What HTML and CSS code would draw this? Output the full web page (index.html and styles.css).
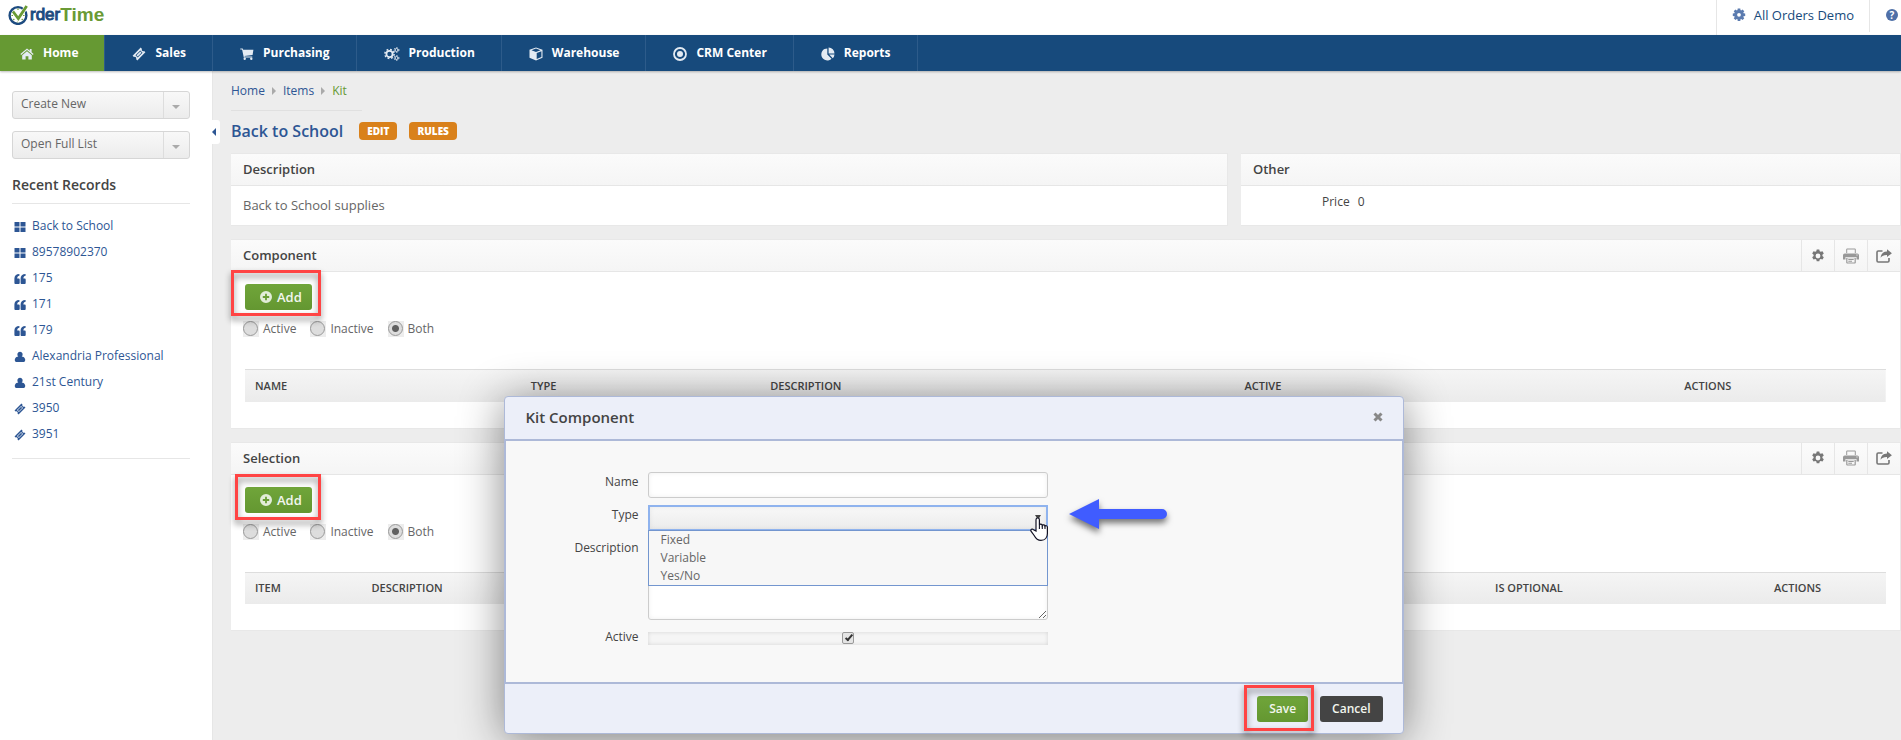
FILE: index.html
```html
<!DOCTYPE html>
<html lang="en">
<head>
    <meta charset="UTF-8">
    <meta name="viewport" content="width=device-width, initial-scale=1.0">
    <title>Order Time - Kit</title>
    <link rel="stylesheet" href="styles.css">
</head>
<body>
    <!-- icon sprite -->
    <svg class="sprite" aria-hidden="true">
        <symbol id="i-home" viewBox="0 0 14 12">
            <path d="M7 3.2 2.2 7.2v4.3h3.4V8.3h2.8v3.2h3.4V7.2z"/>
            <path d="M7 .5.4 6l.8.9L7 2.1l5.8 4.8.8-.9-2-1.7V.9H9.8v1.9z"/>
        </symbol>
        <symbol id="i-ticket" viewBox="0 0 14 14">
            <path fill-rule="evenodd" d="M8.700.6 10 1.900a1.500 1.500 0 0 0 2.100 2.100l1.300 1.300-8.100 8.100L4 12.100A1.500 1.500 0 0 0 1.900 10L.6 8.700zM8.300 3.500 3.500 8.300l2.200 2.200 4.800-4.800zM8.300 4.500 9.500 5.700 5.700 9.500 4.500 8.300z"/>
        </symbol>
        <symbol id="i-cart" viewBox="0 0 14 12">
            <path d="M.3.4h2.400l.5 1.400h10.200L12.600 7 4.500 7.900l.2.7h7.600v1H3.800L2.100 1.400H.3z"/>
            <circle cx="4.700" cy="10.700" r="1.200"/><circle cx="11.300" cy="10.700" r="1.200"/>
        </symbol>
        <symbol id="i-gears" viewBox="0 0 16 14">
            <circle cx="5.500" cy="7" r="3.100" fill="none" stroke="currentColor" stroke-width="1.800"/>
            <circle cx="5.500" cy="7" r="4.600" fill="none" stroke="currentColor" stroke-width="1.500" stroke-dasharray="1.800 1.810"/>
            <circle cx="12.500" cy="3" r="1.500" fill="none" stroke="currentColor" stroke-width="1"/>
            <circle cx="12.500" cy="3" r="2.400" fill="none" stroke="currentColor" stroke-width="1" stroke-dasharray="1.200 1.310"/>
            <circle cx="12.500" cy="11" r="1.500" fill="none" stroke="currentColor" stroke-width="1"/>
            <circle cx="12.500" cy="11" r="2.400" fill="none" stroke="currentColor" stroke-width="1" stroke-dasharray="1.200 1.310"/>
        </symbol>
        <symbol id="i-cube" viewBox="0 0 14 14">
            <path fill-rule="evenodd" d="M7 .4 13.500 2.800v8L7 13.600.5 10.800v-8zM7 1.500 2.500 3.200 7 4.900l4.500-1.700zM7.700 6v6.100l4.700-2V4.200z"/>
        </symbol>
        <symbol id="i-target" viewBox="0 0 14 14">
            <circle cx="7" cy="7" r="6" fill="none" stroke="currentColor" stroke-width="1.800"/>
            <circle cx="7" cy="7" r="3"/>
        </symbol>
        <symbol id="i-pie" viewBox="0 0 14 14">
            <path d="M6.300 1.400v6l4.200 4.300A6 6 0 1 1 6.300 1.400z"/>
            <path d="M7.600.4a6 6 0 0 1 5.900 6H7.600zM8.200 7.600h5.300a6 6 0 0 1-1.700 3.700z"/>
        </symbol>
        <symbol id="i-cog" viewBox="0 0 14 14">
            <path fill-rule="evenodd" d="M5.700.5h2.600l.4 1.800 1 .5 1.800-.6 1.300 2.200-1.400 1.300v1.200l1.400 1.300-1.300 2.200-1.800-.5-1 .5-.4 1.900H5.700l-.4-1.900-1-.5-1.800.5-1.300-2.200 1.400-1.300V5.700L1.200 4.400l1.300-2.200 1.800.6 1-.5zM7 4.600a2.400 2.400 0 1 0 0 4.800 2.400 2.400 0 0 0 0-4.800z"/>
        </symbol>
        <symbol id="i-cert" viewBox="0 0 14 14">
            <path fill-rule="evenodd" d="M5.700.5h2.600l.2 1.600.7.3 1.300-1 1.800 1.800-1 1.300.3.700 1.600.2v2.600l-1.600.2-.3.700 1 1.300-1.800 1.800-1.300-1-.7.3-.2 1.700H5.700l-.2-1.700-.7-.3-1.300 1-1.800-1.800 1-1.300-.3-.7L.8 8V5.400l1.600-.2.3-.7-1-1.300 1.800-1.800 1.300 1 .7-.3zM7 4.900a1.900 1.900 0 1 0 0 3.800 1.900 1.900 0 0 0 0-3.800z"/>
        </symbol>
        <symbol id="i-print" viewBox="0 0 16 16">
            <path d="M3.200 5V1.500a1 1 0 0 1 1-1h7.600a1 1 0 0 1 1 1V5h-1V1.600H4.200V5z"/>
            <path fill-rule="evenodd" d="M1.800 5.500h12.400A1.800 1.800 0 0 1 16 7.300v4.200h-2.500V9h-11v2.500H0V7.300a1.800 1.800 0 0 1 1.800-1.800zm11.700 1v1h1v-1z"/>
            <path fill-rule="evenodd" d="M3.200 9.800h9.600v4.700a1 1 0 0 1-1 1H4.200a1 1 0 0 1-1-1zm1.200.5v4.100h7.200v-4.100z"/>
            <path d="M5.300 11h5.400v1H5.300zM5.300 12.700h3.700v1H5.300z"/>
        </symbol>
        <symbol id="i-share" viewBox="0 0 16 14">
            <path d="M6.500 2H2.200A1.200 1.200 0 0 0 1 3.200v8.600A1.200 1.200 0 0 0 2.200 13h9.600a1.200 1.200 0 0 0 1.200-1.200V9" fill="none" stroke="currentColor" stroke-width="1.600"/>
            <path d="M11 .3 15.900 4.200 11 8.100V6C8 5.900 6 6.700 4.600 8.800 4.800 5.300 7 2.600 11 2.500z"/>
        </symbol>
        <symbol id="i-plus" viewBox="0 0 12 12">
            <path fill-rule="evenodd" d="M6 0a6 6 0 1 1 0 12A6 6 0 0 1 6 0zM5.100 2.800v2.300H2.800v1.800h2.300v2.300h1.800V6.900h2.300V5.100H6.900V2.800z"/>
        </symbol>
        <symbol id="i-grid" viewBox="0 0 12 12">
            <path d="M.5 1h5v4.500h-5zM6.500 1h5v4.500h-5zM.5 6.500h5V11h-5zM6.500 6.500h5V11h-5z"/>
        </symbol>
        <symbol id="i-quote" viewBox="0 0 12 12">
            <path d="M5.400 1v1.700C4 2.900 3.300 3.700 3.200 5.400h1.300c.8 0 1.200.4 1.200 1.200v3.200c0 .8-.4 1.200-1.200 1.200H1.600C.8 11 .4 10.600.4 9.800V5.500C.4 2.700 2.100 1.100 5.400 1zM11.600 1v1.700c-1.400.2-2.100 1-2.200 2.700h1.100c.8 0 1.200.4 1.200 1.200v3.200c0 .8-.4 1.200-1.200 1.200H7.800c-.8 0-1.200-.4-1.200-1.200V5.500c0-2.800 1.700-4.400 5-4.500z"/>
        </symbol>
        <symbol id="i-user" viewBox="0 0 12 12">
            <path d="M6 .8a2.600 2.700 0 0 1 1.700 4.800c1.800.3 3.100 1 3.500 2.900.1 1.600-.4 2.500-1.500 2.500H2.300C1.200 11 .7 10.100.8 8.500c.4-1.900 1.700-2.600 3.500-2.900A2.600 2.700 0 0 1 6 .8z"/>
        </symbol>
    </svg>

    <header class="topbar">
        <a class="logo" href="#">
            <svg class="logo_mark" viewBox="0 0 24 20" aria-hidden="true">
                <circle cx="10" cy="10.500" r="8.400" fill="none" stroke="#1d4b80" stroke-width="2.400"/>
                <path d="M10 3.500v1.500M10 16v1.500M3.500 10.500H5M15 10.500h1.500M5.300 6l1 1M5.300 15l1-1M14.700 15l-1-1" stroke="#6a9a35" stroke-width="1.200"/>
                <path d="M5.500 6.500 10.300 14 18.500 1.500" fill="none" stroke="#fff" stroke-width="4"/>
                <path d="M5 6.500 10.300 13.500 18.700 1" fill="none" stroke="#6a9a35" stroke-width="2.800"/>
            </svg>
            <span class="logo_order">rder</span><span class="logo_time">Time</span>
        </a>
        <div class="account">
            <a class="account_link" href="#"><svg class="icon"><use href="#i-cert"/></svg>All Orders Demo</a>
            <a class="help" href="#" aria-label="Help"><span class="help_mark">?</span></a>
        </div>
    </header>

    <nav class="nav">
        <a class="nav_item active" href="#"><svg class="icon"><use href="#i-home"/></svg>Home</a>
        <a class="nav_item" href="#"><svg class="icon"><use href="#i-ticket"/></svg>Sales</a>
        <a class="nav_item" href="#"><svg class="icon"><use href="#i-cart"/></svg>Purchasing</a>
        <a class="nav_item" href="#"><svg class="icon wide"><use href="#i-gears"/></svg>Production</a>
        <a class="nav_item" href="#"><svg class="icon"><use href="#i-cube"/></svg>Warehouse</a>
        <a class="nav_item" href="#"><svg class="icon"><use href="#i-target"/></svg>CRM Center</a>
        <a class="nav_item" href="#"><svg class="icon"><use href="#i-pie"/></svg>Reports</a>
    </nav>

    <div class="page">
        <aside class="sidebar">
            <div class="picker">
                <select class="picker_select" aria-label="Create New"><option>Create New</option></select>
            </div>
            <div class="picker">
                <select class="picker_select" aria-label="Open Full List"><option>Open Full List</option></select>
            </div>
            <h2 class="sidebar_title">Recent Records</h2>
            <ul class="records">
                <li><a href="#"><svg class="icon"><use href="#i-grid"/></svg>Back to School</a></li>
                <li><a href="#"><svg class="icon"><use href="#i-grid"/></svg>89578902370</a></li>
                <li><a href="#"><svg class="icon"><use href="#i-quote"/></svg>175</a></li>
                <li><a href="#"><svg class="icon"><use href="#i-quote"/></svg>171</a></li>
                <li><a href="#"><svg class="icon"><use href="#i-quote"/></svg>179</a></li>
                <li><a href="#"><svg class="icon"><use href="#i-user"/></svg>Alexandria Professional</a></li>
                <li><a href="#"><svg class="icon"><use href="#i-user"/></svg>21st Century</a></li>
                <li><a href="#"><svg class="icon"><use href="#i-ticket"/></svg>3950</a></li>
                <li><a href="#"><svg class="icon"><use href="#i-ticket"/></svg>3951</a></li>
            </ul>
            <button class="collapse" type="button" aria-label="Collapse sidebar"></button>
        </aside>

        <main class="content">
            <div class="breadcrumb">
                <a href="#">Home</a><i></i><a href="#">Items</a><i></i><span>Kit</span>
            </div>
            <div class="heading">
                <h1>Back to School</h1>
                <button class="tag" type="button">EDIT</button>
                <button class="tag" type="button">RULES</button>
            </div>

            <div class="columns">
                <section class="panel">
                    <h3 class="panel_head">Description</h3>
                    <p class="panel_text">Back to School supplies</p>
                </section>
                <section class="panel">
                    <h3 class="panel_head">Other</h3>
                    <p class="price"><span>Price</span><span>0</span></p>
                </section>
            </div>

            <section class="panel">
                <div class="panel_head">
                    <h3>Component</h3>
                    <div class="tools">
                        <button type="button" aria-label="Settings"><svg class="icon"><use href="#i-cog"/></svg></button>
                        <button type="button" aria-label="Print"><svg class="icon print"><use href="#i-print"/></svg></button>
                        <button type="button" aria-label="Export"><svg class="icon wide"><use href="#i-share"/></svg></button>
                    </div>
                </div>
                <div class="panel_body">
                    <div class="marked mark_component">
                        <button class="btn add" type="button"><svg class="icon"><use href="#i-plus"/></svg>Add</button>
                    </div>
                    <div class="filters">
                        <label><input type="radio" name="component_state">Active</label>
                        <label><input type="radio" name="component_state">Inactive</label>
                        <label><input type="radio" name="component_state" checked>Both</label>
                    </div>
                    <table class="grid component_grid">
                        <thead>
                            <tr><th>NAME</th><th>TYPE</th><th>DESCRIPTION</th><th>ACTIVE</th><th>ACTIONS</th></tr>
                        </thead>
                    </table>
                </div>
            </section>

            <section class="panel">
                <div class="panel_head">
                    <h3>Selection</h3>
                    <div class="tools">
                        <button type="button" aria-label="Settings"><svg class="icon"><use href="#i-cog"/></svg></button>
                        <button type="button" aria-label="Print"><svg class="icon print"><use href="#i-print"/></svg></button>
                        <button type="button" aria-label="Export"><svg class="icon wide"><use href="#i-share"/></svg></button>
                    </div>
                </div>
                <div class="panel_body">
                    <div class="marked mark_selection">
                        <button class="btn add" type="button"><svg class="icon"><use href="#i-plus"/></svg>Add</button>
                    </div>
                    <div class="filters">
                        <label><input type="radio" name="selection_state">Active</label>
                        <label><input type="radio" name="selection_state">Inactive</label>
                        <label><input type="radio" name="selection_state" checked>Both</label>
                    </div>
                    <table class="grid selection_grid">
                        <thead>
                            <tr><th>ITEM</th><th>DESCRIPTION</th><th>IS OPTIONAL</th><th>ACTIONS</th></tr>
                        </thead>
                    </table>
                </div>
            </section>
        </main>
    </div>

    <div class="dialog" role="dialog" aria-labelledby="dialog_title">
        <div class="dialog_head">
            <h2 id="dialog_title">Kit Component</h2>
            <button class="close" type="button" aria-label="Close">
                <svg viewBox="0 0 10 10"><path d="M1.500 1.500l7 7M8.500 1.500l-7 7" stroke="#888" stroke-width="3"/></svg>
            </button>
        </div>
        <form class="dialog_body">
            <label for="kit_name">Name</label>
            <input class="field" id="kit_name" type="text">

            <label for="kit_type">Type</label>
            <div class="type">
                <select class="field" id="kit_type">
                    <option></option>
                </select>
                <ul class="type_list">
                    <li>Fixed</li>
                    <li>Variable</li>
                    <li>Yes/No</li>
                </ul>
                <svg class="cursor" viewBox="0 0 18 24" aria-hidden="true">
                    <path d="M6 14V2.800c0-2.400 3.400-2.400 3.400 0V8c.4-1.400 2.700-1.200 2.900.4.500-1 2.500-.7 2.700.7.600-.8 2.300-.5 2.400 1v6.400c0 4-2.400 6.900-6.400 6.900-3.600 0-5.400-2.200-7-5.200L1 14.200c-.8-1.700 1.200-2.800 2.500-1.500z" fill="#fff" stroke="#112" stroke-width="1.200"/>
                    <path d="M9.400 8v4M12.300 8.600V12M15 9.300V12" stroke="#112" stroke-width="1.100"/>
                </svg>
                <svg class="arrow" viewBox="0 0 100 32" aria-hidden="true">
                    <path d="M0 15 30 0v10h63a5 5 0 0 1 0 10H30v10z" fill="#405cff"/>
                </svg>
            </div>

            <label for="kit_description">Description</label>
            <textarea class="field" id="kit_description"></textarea>

            <label for="kit_active">Active</label>
            <div class="check"><input id="kit_active" type="checkbox" checked></div>
        </form>
        <div class="dialog_foot">
            <div class="marked mark_save">
                <button class="btn" type="button">Save</button>
            </div>
            <button class="btn dark" type="button">Cancel</button>
        </div>
    </div>
</body>
</html>
```

FILE: styles.css
```css
*,
*::before,
*::after{
    padding: 0;
    margin: 0;
    box-sizing: border-box;
}

:root{
    --blue: #174a7c;
    --link: #2d5694;
    --green: #669933;
    --line: #e6e6e6;
    --dialog_line: #adb9d8;
}

body{
    display: flex;
    flex-direction: column;
    position: relative;
    min-height: 100vh;
    background: #ededed;
    color: #444;
    font: 12px/18px "Open Sans", "Noto Sans", sans-serif;
}

a{
    color: var(--link);
    text-decoration: none;
}

button, input, select, textarea{
    font: inherit;
    color: inherit;
}

ul{
    list-style: none;
}

.sprite{
    position: absolute;
    width: 0;
    height: 0;
}

.icon{
    display: block;
    flex: none;
    width: 14px;
    height: 14px;
    fill: currentColor;
}

.icon.wide{
    width: 16px;
}

/* top bar */
.topbar{
    display: flex;
    justify-content: space-between;
    height: 35px;
    background: #fff;
}

.logo{
    display: flex;
    align-items: center;
    height: 30px;
    padding-left: 8px;
    font-family: "Liberation Sans", sans-serif;
    font-size: 17px;
    color: #1d4b80;
}

.logo_mark{
    width: 24px;
    height: 20px;
    margin-right: -2px;
}

.logo_order{
    -webkit-text-stroke: 1px #1d4b80;
}

.logo_time{
    color: #6a9a35;
    font-weight: bold;
    font-size: 19px;
}

.account{
    display: flex;
    align-items: flex-start;
    font-size: 13px;
}

.account_link{
    display: flex;
    align-items: center;
    gap: 8px;
    height: 35px;
    padding: 0 15px 5px 15px;
    border-left: 1px solid var(--line);
    color: var(--blue);
}

.account_link .icon{
    color: #5b7baf;
}

.help{
    height: 32px;
    padding: 9px 3px 0 16px;
    border-left: 1px solid var(--line);
}

.help_mark{
    display: block;
    width: 12px;
    height: 12px;
    border-radius: 50%;
    background: #4f70a8;
    color: #fff;
    font-size: 10px;
    line-height: 12px;
    font-weight: bold;
    text-align: center;
}

/* main menu */
.nav{
    display: flex;
    height: 36px;
    background: var(--blue);
    box-shadow: 0 1px 2px #0004;
    z-index: 1;
}

.nav_item{
    display: flex;
    align-items: center;
    gap: 9px;
    padding: 0 26px 0 27px;
    border-right: 1px solid #2d5b8a;
    color: #fff;
    font-weight: bold;
}

.nav_item.active{
    padding-left: 20px;
    background: var(--green);
}

.nav_item .icon{
    margin-top: 2px;
    color: #e4ebf3;
}

.page{
    display: flex;
    flex: 1;
}

/* sidebar */
.sidebar{
    position: relative;
    flex: none;
    width: 213px;
    padding: 20px 22px 0 12px;
    background: #fff;
    border-right: 1px solid var(--line);
}

.picker{
    position: relative;
    margin-bottom: 12px;
}

.picker_select{
    display: block;
    width: 100%;
    height: 28px;
    padding: 0 30px 2px 8px;
    border: 1px solid #d6d6d6;
    border-radius: 3px;
    background: linear-gradient(#f8f8f8, #ececec);
    color: #666;
    appearance: none;
}

.picker::before{
    content: '';
    position: absolute;
    top: 1px;
    bottom: 1px;
    right: 26px;
    width: 1px;
    background: #ddd;
}

.picker::after{
    content: '';
    position: absolute;
    top: 14px;
    right: 10px;
    border: 4px solid transparent;
    border-top-color: #aaa;
    border-bottom: none;
}

.sidebar_title{
    margin-top: 16px;
    padding-bottom: 8px;
    border-bottom: 1px solid var(--line);
    font-size: 14px;
    line-height: 20px;
    font-weight: 600;
}

.records{
    padding: 9px 0 11px;
    border-bottom: 1px solid var(--line);
}

.records a{
    display: flex;
    align-items: center;
    gap: 6px;
    height: 26px;
    padding-left: 2px;
}

.records .icon{
    width: 12px;
    height: 12px;
    margin-top: 1px;
}

/* tab that hides the sidebar */
.collapse{
    position: absolute;
    top: 49px;
    right: -8px;
    width: 8px;
    height: 24px;
    border: none;
    border-radius: 0 3px 3px 0;
    background: #fff;
}

.collapse::before{
    content: '';
    position: absolute;
    top: 8px;
    left: 0;
    border: 4px solid transparent;
    border-right-color: var(--link);
    border-left: none;
}

/* content */
.content{
    flex: 1;
    min-width: 0;
    padding: 11px 0 0 18px;
}

.breadcrumb{
    display: inline-flex;
    align-items: center;
    min-width: 131px;
    padding-bottom: 10px;
    border-bottom: 1px solid #e0e0e0;
}

.breadcrumb i{
    margin: 0 7px;
    border: 4px solid transparent;
    border-left-color: #aaa;
    border-right: none;
}

.breadcrumb span{
    color: var(--green);
}

.heading{
    display: flex;
    align-items: center;
    gap: 12px;
    margin: 8px 0 10px;
}

.heading h1{
    margin-right: 4px;
    color: var(--link);
    font-size: 16px;
    line-height: 24px;
    font-weight: 600;
}

.tag{
    height: 18px;
    padding: 0 8px;
    border: none;
    border-radius: 4px;
    background: #d9811b;
    color: #fff;
    font-size: 10px;
    line-height: 18px;
    font-weight: 800;
}

.columns{
    display: grid;
    grid-template-columns: 997fr 660fr;
    gap: 13px;
}

.panel{
    margin-bottom: 13px;
    background: #fff;
    border: 1px solid #e8e8e8;
    border-left: none;
}

.panel_head{
    display: flex;
    justify-content: space-between;
    height: 32px;
    padding-left: 12px;
    background: linear-gradient(#fbfbfb, #f5f5f5);
    border-bottom: 1px solid var(--line);
}

.panel_head,
.panel_head h3{
    font-size: 13px;
    line-height: 31px;
    font-weight: 600;
}

.panel_text{
    padding: 10px 12px 11px;
    color: #666;
    font-size: 13px;
}

.price{
    display: flex;
    gap: 8px;
    padding: 7px 0 0 81px;
}

.tools{
    display: flex;
}

.tools button{
    display: flex;
    align-items: center;
    justify-content: center;
    width: 33px;
    border: none;
    border-left: 1px solid var(--line);
    background: transparent;
    color: #777;
}

.tools .print{
    width: 16px;
    height: 16px;
    color: #999;
}

.panel_body{
    padding: 12px 14px 26px;
}

.btn{
    display: flex;
    align-items: center;
    height: 26px;
    padding: 0 12px;
    border: none;
    border-radius: 3px;
    background: linear-gradient(#70a53a, #649731);
    color: #f2f6ee;
    font-weight: 600;
}

.btn.add{
    gap: 5px;
    padding: 0 10px 0 15px;
    font-size: 13px;
}

.btn.add .icon{
    width: 12px;
    height: 12px;
    color: #e2edd8;
}

.btn.dark{
    background: #444;
}

/* red frame round a control */
.marked{
    position: relative;
    width: max-content;
}

.marked::after{
    content: '';
    position: absolute;
    border: 3px solid #ff4444;
    filter: drop-shadow(0 4px 3px #0007);
    pointer-events: none;
}

.mark_component::after{
    inset: -14px -9px -6px -14px;
}

.mark_selection::after{
    inset: -13px -9px -7px -10px;
}

.mark_save::after{
    inset: -11px -6px -9px -13px;
}

.filters{
    display: flex;
    gap: 14px;
    margin: 10px 0 31px -2px;
    color: #666;
}

.filters label{
    display: flex;
    align-items: center;
    gap: 4px;
}

.filters input{
    width: 16px;
    height: 16px;
    background: #ededed;
    appearance: none;
}

.filters input::before{
    content: '';
    display: block;
    width: 15px;
    height: 15px;
    border: 1px solid #999;
    border-radius: 50%;
    background: #ddd;
}

.filters input:checked::before{
    background: radial-gradient(circle, #606060 3px, #ddd 4px);
}

.grid{
    width: 100%;
    border-collapse: collapse;
    table-layout: fixed;
}

.grid th{
    height: 32px;
    padding: 0 10px;
    border-top: 1px solid #ddd;
    text-align: left;
    font-size: 11px;
    font-weight: 600;
}

.grid thead{
    background: linear-gradient(#f5f5f5, #ebebeb);
}

.component_grid th:nth-child(1){
    width: 16.8%;
}
.component_grid th:nth-child(2){
    width: 14.6%;
}
.component_grid th:nth-child(3){
    width: 28.9%;
}
.component_grid th:nth-child(4){
    width: 26.8%;
}

.selection_grid th:nth-child(1){
    width: 7.1%;
}
.selection_grid th:nth-child(3){
    width: 17%;
}
.selection_grid th:nth-child(4){
    width: 122px;
}

/* dialog */
.dialog{
    position: absolute;
    top: 396px;
    left: 50%;
    width: 900px;
    margin-left: -447px;
    border: 1px solid var(--dialog_line);
    border-radius: 4px;
    background: #eceff9;
    box-shadow: 0 5px 45px #0007;
    z-index: 2;
}

.dialog_head{
    display: flex;
    align-items: center;
    justify-content: space-between;
    height: 42px;
    padding: 0 20px 2px 21px;
}

.dialog_head h2{
    font-size: 15px;
    font-weight: 600;
}

.close{
    width: 10px;
    height: 10px;
    border: none;
    background: transparent;
}

.close svg{
    display: block;
}

.dialog_body{
    display: grid;
    grid-template-columns: 134px 400px;
    gap: 7px 8px;
    padding: 31px 0 33px;
    border: 2px solid var(--dialog_line);
    border-left-width: 1px;
    border-right-width: 1px;
    background: #f8f8f8;
}

.dialog_body label{
    padding-right: 1px;
    text-align: right;
    line-height: 20px;
}

.field{
    display: block;
    width: 100%;
    height: 26px;
    border: 1px solid #ccc;
    border-radius: 3px;
    background: #fff;
    box-shadow: inset 0 0 5px #0001;
    outline: none;
}

textarea.field{
    height: 82px;
}

.type{
    position: relative;
}

select.field{
    border: 2px solid #8fb3ee;
    border-radius: 0;
    background: linear-gradient(#f8f8f8, #ececec);
    appearance: none;
}

.type::after{
    content: '';
    position: absolute;
    top: 10px;
    right: 7px;
    border: 3px solid transparent;
    border-top: 5px solid #444;
    border-bottom: none;
}

.type_list{
    position: absolute;
    top: 25px;
    left: 0;
    right: 0;
    padding-left: 12px;
    border: 1px solid #7396cf;
    background: #f7f7f7;
    color: #666;
}

.cursor{
    position: absolute;
    top: 12px;
    right: 0;
    width: 18px;
    height: 24px;
    z-index: 1;
}

/* pointer to the drop-down */
.arrow{
    position: absolute;
    top: -6px;
    left: 421px;
    width: 100px;
    height: 32px;
    overflow: visible;
    filter: drop-shadow(0 4px 3px #0008);
}

.check{
    display: flex;
    justify-content: center;
    height: 13px;
    margin: 5px 0 4px;
    background: #f5f5f5;
    box-shadow: inset 0 0 4px #0002;
}

.check input{
    width: 12px;
    height: 12px;
    border: 1px solid #999;
    border-radius: 2px;
    background: #e4e4e4;
    appearance: none;
}

.check input:checked::before{
    content: '';
    display: block;
    width: 4px;
    height: 8px;
    margin: 0 0 0 4px;
    border: solid #333;
    border-width: 0 2px 2px 0;
    transform: rotate(40deg);
}

.dialog_foot{
    display: flex;
    justify-content: flex-end;
    gap: 12px;
    padding: 12px 20px 11px;
}
```
